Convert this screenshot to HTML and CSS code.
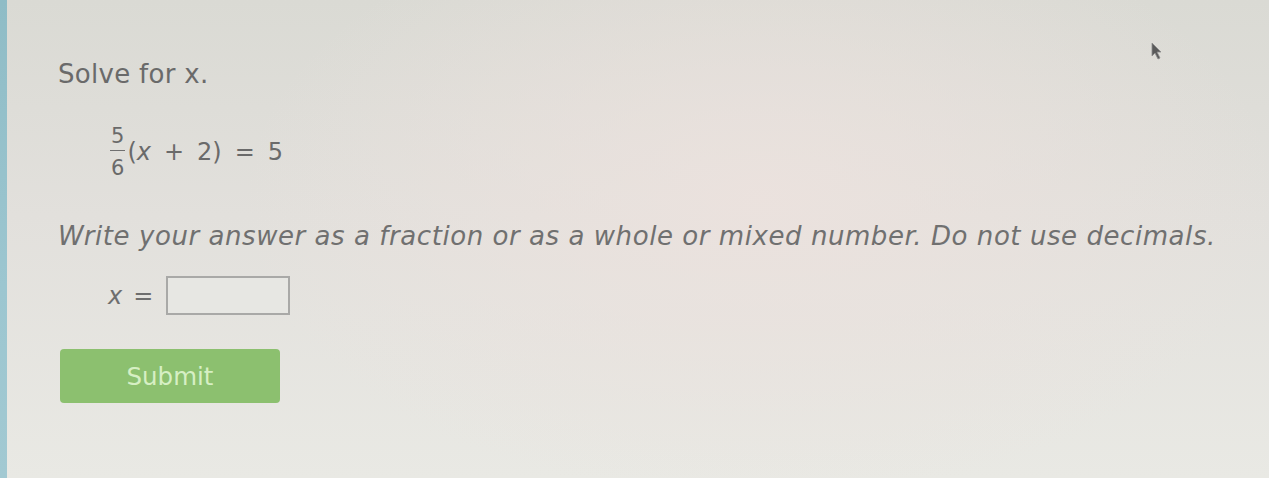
FILE: index.html
```html
<!DOCTYPE html>
<html>
<head>
<meta charset="utf-8">
<link rel="stylesheet" href="styles.css">
</head>
<body>
<div class="screen">
  <div class="sidebar"></div>
  <div class="content">
    <div class="title">Solve for <i>x</i>.</div>
    <div class="equation">
      <span class="frac"><span class="num">5</span><span class="den">6</span></span><span class="expr">(<i>x</i><span class="op">+</span>2)<span class="op">=</span>5</span>
    </div>
    <div class="instruction">Write your answer as a fraction or as a whole or mixed number. Do not use decimals.</div>
    <div class="answer">
      <span class="var"><i>x</i><span class="op">=</span></span>
      <span class="box"></span>
    </div>
    <button class="submit">Submit</button>
  </div>
  <svg class="cursor" width="14" height="18" viewBox="0 0 14 18"><path d="M2 1 L2 14 L5 11 L8 17 L10 16 L7 10 L11 10 Z" fill="#5a5a5a" stroke="#8a8a8a" stroke-width="0.8"/></svg>
</div>
</body>
</html>
```

FILE: styles.css
```css
html, body {
  margin: 0;
  padding: 0;
}
body {
  width: 1269px;
  height: 478px;
  overflow: hidden;
  font-family: "DejaVu Sans", Verdana, sans-serif;
}
.screen {
  position: relative;
  display: flex;
  width: 1269px;
  height: 478px;
  background:
    radial-gradient(ellipse 520px 300px at 760px 200px, rgba(236, 226, 222, 0.9), rgba(236, 226, 222, 0) 100%),
    linear-gradient(180deg, #dadad4 0%, #e2e0dc 45%, #e9e9e4 100%);
}
.sidebar {
  width: 7px;
  flex: none;
  background: linear-gradient(180deg, #8fbcc6, #9cc6d0 60%, #a2c9d2);
}
.content {
  display: flex;
  flex-direction: column;
  align-items: flex-start;
  padding-left: 51px;
  padding-top: 59px;
  color: #6e6e6e;
}
.title {
  font-size: 26px;
  line-height: 30px;
  letter-spacing: 0.3px;
  color: #6a6a6a;
}
.title i {
  font-style: normal;
}
.equation {
  display: flex;
  align-items: center;
  margin-top: 34px;
  margin-left: 52px;
  height: 56px;
  color: #6a6a6a;
}
.frac {
  display: flex;
  flex-direction: column;
  align-items: center;
  font-size: 21px;
  line-height: 20px;
  margin-top: 2px;
}
.num {
  border-bottom: 1.5px solid #707070;
  padding: 0 1px 4px;
}
.den {
  padding-top: 7px;
}
.expr {
  font-size: 24px;
  line-height: 28px;
  margin-top: 2px;
  margin-left: 2px;
}
.expr i, .var i {
  font-style: italic;
}
.op {
  margin: 0 13px;
}
.instruction {
  margin-top: 42px;
  font-size: 26px;
  line-height: 30px;
  letter-spacing: 0.56px;
  font-style: italic;
  color: #707070;
  white-space: nowrap;
}
.answer {
  display: flex;
  align-items: center;
  margin-top: 25px;
  margin-left: 50px;
}
.var {
  font-size: 24px;
  color: #6e6e6e;
}
.var .op {
  margin: 0 0 0 11px;
}
.box {
  width: 120px;
  height: 35px;
  margin-left: 13px;
  border: 2px solid #a9a9a7;
  background: #e7e7e3;
  box-sizing: content-box;
}
.submit {
  margin-top: 34px;
  margin-left: 2px;
  width: 220px;
  height: 54px;
  border: none;
  border-radius: 4px;
  background: #8cc06f;
  color: #d6efc4;
  font-family: "DejaVu Sans", Verdana, sans-serif;
  font-size: 24.5px;
  padding: 0 0 0 0;
}
.cursor {
  position: absolute;
  left: 1150px;
  top: 42px;
}
```
